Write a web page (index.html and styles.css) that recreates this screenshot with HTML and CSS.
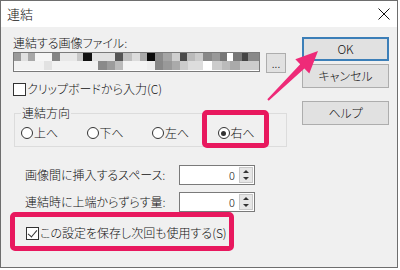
FILE: index.html
```html
<!DOCTYPE html>
<html lang="ja">
<head>
    <meta charset="UTF-8">
    <title>連結</title>
    <link rel="stylesheet" href="styles.css">
</head>
<body>
    <div class="window">
        <div class="titlebar">
            <span class="title">連結</span>
            <svg class="close" width="12" height="12" viewBox="0 0 12 12">
                <path d="M0.5 0.5 L11.5 11.5 M11.5 0.5 L0.5 11.5" stroke="#111" stroke-width="1"/>
            </svg>
        </div>
        <div class="content">
            <div class="main">
                <div class="file-label">連結する画像ファイル:</div>
                <div class="file-row">
                    <div class="file-field">
                        <svg width="245" height="17" viewBox="0 0 245 17">
                            <rect x="0" y="0" width="245" height="17" fill="#eeeeee"/>
                            <rect x="0" y="0" width="7" height="8" fill="#9a9a9a"/>
                            <rect x="7" y="0" width="7" height="8" fill="#e0e0e0"/>
                            <rect x="14" y="0" width="7" height="8" fill="#a8a8a8"/>
                            <rect x="21" y="0" width="17" height="8" fill="#f6f6f6"/>
                            <rect x="38" y="0" width="8" height="8" fill="#858585"/>
                            <rect x="46" y="0" width="17" height="8" fill="#e8e8e8"/>
                            <rect x="63" y="0" width="6" height="8" fill="#c8c8c8"/>
                            <rect x="69" y="0" width="9" height="8" fill="#111111"/>
                            <rect x="78" y="0" width="23" height="8" fill="#e2e2e2"/>
                            <rect x="101" y="0" width="8" height="8" fill="#555555"/>
                            <rect x="109" y="0" width="9" height="8" fill="#c0c0c0"/>
                            <rect x="118" y="0" width="8" height="8" fill="#dcdcdc"/>
                            <rect x="126" y="0" width="7" height="8" fill="#aaaaaa"/>
                            <rect x="133" y="0" width="8" height="8" fill="#0a0a0a"/>
                            <rect x="141" y="0" width="8" height="8" fill="#8a8a8a"/>
                            <rect x="149" y="0" width="9" height="8" fill="#a5a5a5"/>
                            <rect x="158" y="0" width="8" height="8" fill="#cfcfcf"/>
                            <rect x="166" y="0" width="7" height="8" fill="#4a4a4a"/>
                            <rect x="173" y="0" width="8" height="8" fill="#bbbbbb"/>
                            <rect x="181" y="0" width="8" height="8" fill="#cccccc"/>
                            <rect x="189" y="0" width="9" height="8" fill="#888888"/>
                            <rect x="198" y="0" width="8" height="8" fill="#999999"/>
                            <rect x="206" y="0" width="7" height="8" fill="#777777"/>
                            <rect x="213" y="0" width="6" height="8" fill="#ffffff"/>
                            <rect x="219" y="0" width="9" height="8" fill="#777777"/>
                            <rect x="228" y="0" width="6" height="8" fill="#444444"/>
                            <rect x="234" y="0" width="11" height="8" fill="#888888"/>
                            <rect x="0" y="8" width="84" height="9" fill="#f2f2f2"/>
                            <rect x="30" y="8" width="8" height="9" fill="#e2e2e2"/>
                            <rect x="84" y="8" width="9" height="9" fill="#8a8a8a"/>
                            <rect x="93" y="8" width="8" height="9" fill="#9c9c9c"/>
                            <rect x="101" y="8" width="8" height="9" fill="#bbbbbb"/>
                            <rect x="109" y="8" width="24" height="9" fill="#f4f4f4"/>
                            <rect x="133" y="8" width="8" height="9" fill="#eeeeee"/>
                            <rect x="141" y="8" width="8" height="9" fill="#888888"/>
                            <rect x="149" y="8" width="9" height="9" fill="#999999"/>
                            <rect x="158" y="8" width="8" height="9" fill="#aaaaaa"/>
                            <rect x="166" y="8" width="8" height="9" fill="#cccccc"/>
                            <rect x="174" y="8" width="15" height="9" fill="#dddddd"/>
                            <rect x="189" y="8" width="9" height="9" fill="#ffffff"/>
                            <rect x="198" y="8" width="10" height="9" fill="#cccccc"/>
                            <rect x="208" y="8" width="8" height="9" fill="#bbbbbb"/>
                            <rect x="216" y="8" width="10" height="9" fill="#aaaaaa"/>
                            <rect x="226" y="8" width="19" height="9" fill="#cccccc"/>
                        </svg>
                    </div>
                    <div class="browse">...</div>
                </div>
                <div class="check clip"><span class="box"></span>クリップボードから入力(C)</div>
                <fieldset class="group">
                    <legend>連結方向</legend>
                    <div class="radios">
                        <div class="radio"><span class="dot"></span>上へ</div>
                        <div class="radio"><span class="dot"></span>下へ</div>
                        <div class="radio"><span class="dot"></span>左へ</div>
                        <div class="radio"><span class="dot on"></span>右へ</div>
                    </div>
                </fieldset>
                <div class="spin-row first">
                    <span class="spin-label">画像間に挿入するスペース:</span>
                    <div class="spin"><span class="value">0</span><span class="arrows"></span></div>
                </div>
                <div class="spin-row">
                    <span class="spin-label">連結時に上端からずらす量:</span>
                    <div class="spin"><span class="value">0</span><span class="arrows"></span></div>
                </div>
                <div class="check save"><span class="box checked"></span>この設定を保存し次回も使用する(S)</div>
            </div>
            <div class="side">
                <div class="btn default">OK</div>
                <div class="btn cancel">キャンセル</div>
                <div class="btn help">ヘルプ</div>
            </div>
        </div>

        <div class="mark mark-dir"></div>
        <div class="mark mark-save"></div>
        <svg class="arrow" width="400" height="270" viewBox="0 0 400 270">
            <polygon points="267.3,99.3 300.2,64.3 295.3,59.3 318,51 309.3,73.5 304.4,68.5 268.7,100.7" fill="#ee2a78"/>
        </svg>
    </div>
</body>
</html>
```

FILE: styles.css
```css
* {
    margin: 0;
    padding: 0;
    box-sizing: border-box;
}

body {
    width: 400px;
    height: 270px;
    background: #fff;
    font-family: "Noto Sans CJK JP", sans-serif;
    font-size: 12px;
    font-weight: 300;
    line-height: 14px;
    color: #111;
    font-feature-settings: "palt";
}

.window {
    position: relative;
    width: 398px;
    height: 268px;
    border: 1px solid #6e6e6e;
    background: #f0f0f0;
    display: flex;
    flex-direction: column;
}

.titlebar {
    height: 26px;
    background: #fff;
    display: flex;
    align-items: center;
    justify-content: space-between;
    padding: 0 7px 0 6px;
}

.title {
    font-size: 13px;
}

.content {
    flex: 1;
    display: flex;
}

.main {
    width: 296px;
    padding: 9px 0 0 12px;
}

.file-row {
    display: flex;
    align-items: flex-start;
    gap: 6px;
    margin-top: 2px;
}

.file-field {
    width: 247px;
    height: 20px;
    border: 1px solid #7a7a7a;
    background: #fff;
}

.file-field svg {
    display: block;
}

.browse {
    width: 20px;
    height: 20px;
    margin-top: 1px;
    border: 1px solid #adadad;
    background: #e1e1e1;
    font-family: "Liberation Sans", sans-serif;
    font-size: 10px;
    font-weight: 400;
    line-height: 22px;
    text-align: center;
    color: #222;
}

.check {
    display: flex;
    align-items: center;
    gap: 1px;
    height: 14px;
}

.check.clip {
    margin-top: 9px;
}

.check.save {
    margin-top: 14px;
    padding-left: 13px;
}

.box {
    width: 13px;
    height: 13px;
    border: 1px solid #333;
    background: #fff;
    position: relative;
}

.box.checked::after {
    content: '';
    position: absolute;
    left: 3px;
    top: 0px;
    width: 4px;
    height: 8px;
    border-right: 1px solid #333;
    border-bottom: 1px solid #333;
    transform: rotate(40deg);
}

.group {
    margin: 10px 0 0 1px;
    width: 273px;
    border: 1px solid #dcdcdc;
    padding: 6px 0 6px 6px;
}

.group legend {
    padding: 0 1px;
    line-height: 14px;
}

.radios {
    display: flex;
}

.radio {
    width: 65.5px;
    display: flex;
    align-items: center;
    gap: 1px;
    height: 14px;
}

.dot {
    width: 12px;
    height: 12px;
    border: 1px solid #333;
    border-radius: 50%;
    background: #fff;
    position: relative;
}

.dot.on::after {
    content: '';
    position: absolute;
    left: 2.5px;
    top: 2.5px;
    width: 5px;
    height: 5px;
    border-radius: 50%;
    background: #333;
}

.spin-row {
    display: flex;
    align-items: center;
    height: 20px;
    margin-top: 7px;
    padding-left: 12px;
}

.spin-row.first {
    margin-top: 18px;
}

.spin-label {
    width: 154px;
}

.spin {
    width: 76px;
    height: 20px;
    border: 1px solid #7a7a7a;
    background: #fff;
    display: flex;
    align-items: center;
    justify-content: flex-end;
    padding-right: 1px;
}

.value {
    margin-right: 4px;
    font-size: 11px;
}

.arrows {
    width: 14px;
    height: 16px;
    background: #e6e6e6;
    border: 1px solid #c8c8c8;
    position: relative;
}

.arrows::before,
.arrows::after {
    content: '';
    position: absolute;
    left: 3px;
    border-left: 3px solid transparent;
    border-right: 3px solid transparent;
}

.arrows::before {
    top: 2px;
    border-bottom: 3px solid #333;
}

.arrows::after {
    bottom: 2px;
    border-top: 3px solid #333;
}

.side {
    flex: 1;
    padding: 10px 8px 0 5px;
    display: flex;
    flex-direction: column;
}

.btn {
    width: 87px;
    height: 24px;
    border: 1px solid #adadad;
    background: #e1e1e1;
    display: flex;
    align-items: center;
    justify-content: center;
}

.btn.default {
    border: 2px solid #3c7fb8;
}

.btn.cancel {
    margin-top: 3px;
}

.btn.help {
    margin-top: 13px;
}

.mark {
    position: absolute;
    border: 5px solid #e8185e;
    border-radius: 5px;
}

.mark-dir {
    left: 201px;
    top: 109px;
    width: 67px;
    height: 38px;
}

.mark-save {
    left: 9px;
    top: 211px;
    width: 224px;
    height: 39px;
}

.arrow {
    position: absolute;
    left: -1px;
    top: -1px;
    pointer-events: none;
}
```
